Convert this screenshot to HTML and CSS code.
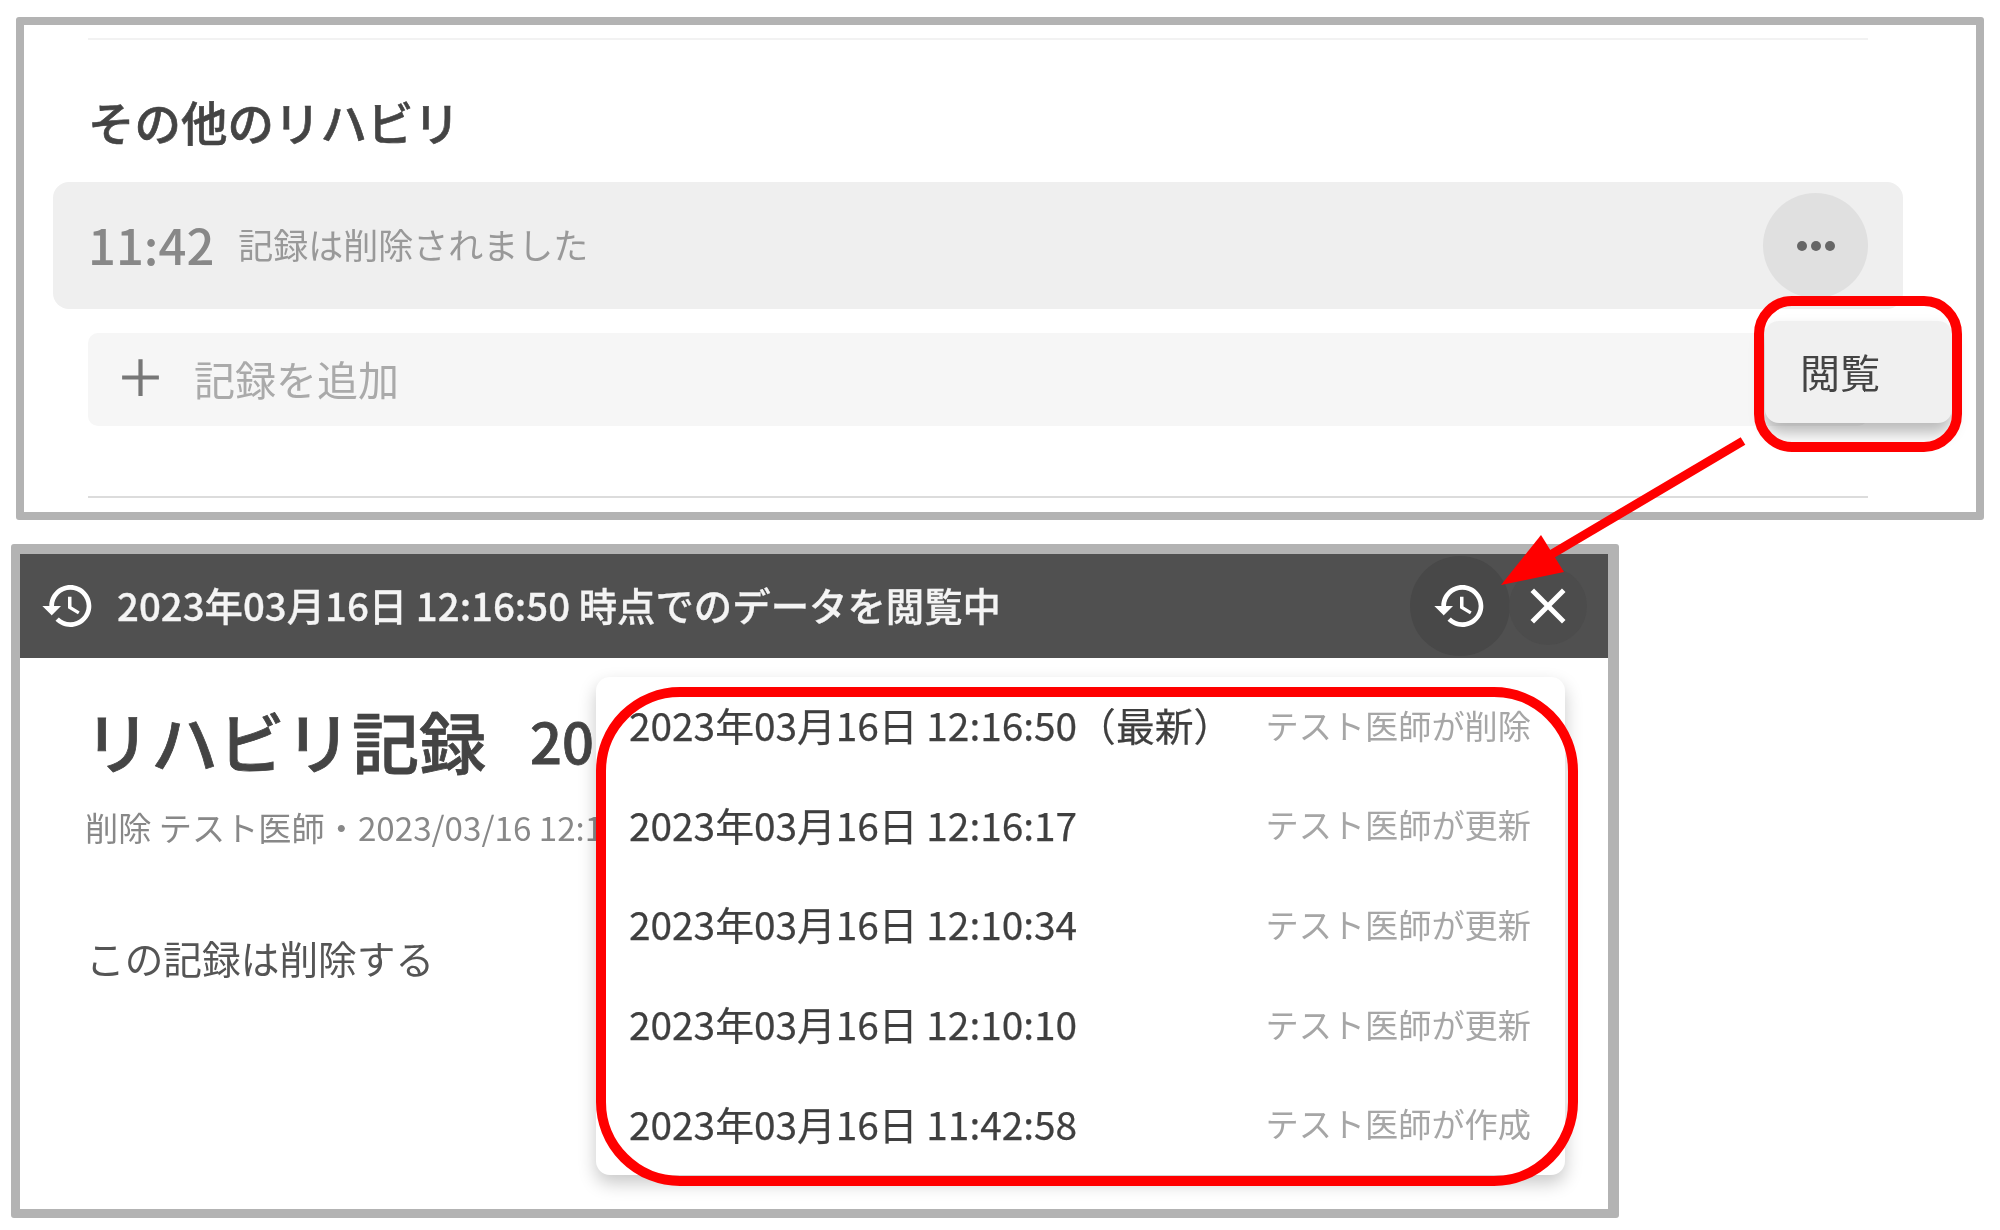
FILE: index.html
```html
<!DOCTYPE html>
<html lang="ja">
<head>
<meta charset="utf-8">
<title>リハビリ記録</title>
<link rel="stylesheet" href="styles.css">
</head>
<body>
<div class="page">
  <section class="panel panel-top">
    <div class="rule rule-light"></div>
    <h2 class="section-title">その他のリハビリ</h2>
    <div class="record">
      <span class="record-time">11:42</span>
      <span class="record-note">記録は削除されました</span>
      <span class="more-btn"><i></i><i></i><i></i></span>
    </div>
    <div class="add-row">
      <svg class="add-icon" viewBox="0 0 24 24"><path d="M19 12.8h-6.2V19h-1.6v-6.2H5v-1.6h6.2V5h1.6v6.2H19z"/></svg>
      <span>記録を追加</span>
    </div>
    <div class="rule rule-dark"></div>
  </section>

  <section class="panel panel-bottom">
    <header class="viewbar">
      <svg class="bar-icon" viewBox="0 0 24 24"><path d="M13 3c-4.97 0-9 4.03-9 9H1l3.89 3.89.07.14L9 12H6c0-3.87 3.13-7 7-7s7 3.13 7 7-3.13 7-7 7c-1.93 0-3.68-.79-4.94-2.06l-1.42 1.42C8.27 19.99 10.51 21 13 21c4.97 0 9-4.03 9-9s-4.03-9-9-9zm-1 5v5l4.28 2.54.72-1.21-3.5-2.08V8H12z"/></svg>
      <span class="bar-text">2023年03月16日 12:16:50 時点でのデータを閲覧中</span>
      <span class="bar-btn bar-btn-history">
        <svg class="bar-icon" viewBox="0 0 24 24"><path d="M13 3c-4.97 0-9 4.03-9 9H1l3.89 3.89.07.14L9 12H6c0-3.87 3.13-7 7-7s7 3.13 7 7-3.13 7-7 7c-1.93 0-3.68-.79-4.94-2.06l-1.42 1.42C8.27 19.99 10.51 21 13 21c4.97 0 9-4.03 9-9s-4.03-9-9-9zm-1 5v5l4.28 2.54.72-1.21-3.5-2.08V8H12z"/></svg>
      </span>
      <span class="bar-btn bar-btn-close">
        <svg class="close-icon" viewBox="0 0 24 24"><path d="M19 6.41 17.59 5 12 10.59 6.41 5 5 6.41 10.59 12 5 17.59 6.41 19 12 13.41 17.59 19 19 17.59 13.41 12z"/></svg>
      </span>
    </header>
    <div class="doc">
      <h1 class="doc-title">リハビリ記録<span class="doc-date">20</span></h1>
      <p class="doc-meta">削除 テスト医師・2023/03/16 12:1</p>
      <p class="doc-body">この記録は削除する</p>
    </div>
  </section>

  <div class="menu">閲覧</div>

  <ul class="history">
    <li class="history-row"><span>2023年03月16日 12:16:50（最新）</span><span class="history-who">テスト医師が削除</span></li>
    <li class="history-row"><span>2023年03月16日 12:16:17</span><span class="history-who">テスト医師が更新</span></li>
    <li class="history-row"><span>2023年03月16日 12:10:34</span><span class="history-who">テスト医師が更新</span></li>
    <li class="history-row"><span>2023年03月16日 12:10:10</span><span class="history-who">テスト医師が更新</span></li>
    <li class="history-row"><span>2023年03月16日 11:42:58</span><span class="history-who">テスト医師が作成</span></li>
  </ul>

  <div class="callout callout-menu"></div>
  <div class="callout callout-history"></div>
  <svg class="arrow" viewBox="0 0 2000 1230">
    <line x1="1743" y1="441" x2="1530" y2="567" stroke="#ff0000" stroke-width="9"/>
    <polygon points="1541,535 1564,572 1501,585" fill="#ff0000"/>
  </svg>
</div>
</body>
</html>
```
FILE: styles.css
```css
* { box-sizing: border-box; }
html, body { margin: 0; padding: 0; background: #fff; }
body {
  font-family: "Noto Sans CJK JP", "Noto Sans", sans-serif;
  color: #444;
}
.page {
  position: relative;
  width: 2000px;
  height: 1230px;
  padding-top: 17px;
  overflow: hidden;
  filter: blur(0.6px);
}
.panel {
  background: #fff;
  border: 8px solid #b3b3b3;
  border-radius: 3px;
}
.panel-top {
  width: 1968px;
  height: 503px;
  margin-left: 16px;
  padding: 13px 108px 0 64px;
}
.rule { height: 2px; }
.rule-light { background: #f2f2f2; }
.rule-dark { background: #dcdcdc; margin-top: 70px; }
.section-title {
  margin: 51px 0 0;
  font-size: 46.5px;
  line-height: 60px;
  font-weight: 500;
  color: #444;
  -webkit-text-stroke: 0.6px #444;
}
.record {
  display: flex;
  align-items: center;
  height: 127px;
  margin: 31px -35px 0 -35px;
  padding: 0 35px 0 35px;
  background: #efefef;
  border-radius: 16px;
}
.record-time {
  font-size: 49px;
  font-weight: 500;
  color: #888;
  line-height: 1;
  padding-bottom: 5px;
}
.record-note {
  margin-left: 24px;
  padding-bottom: 5px;
  font-size: 35px;
  color: #999;
}
.more-btn {
  display: flex;
  align-items: center;
  justify-content: center;
  gap: 4px;
  width: 105px;
  height: 105px;
  margin-left: auto;
  border-radius: 50%;
  background: #e0e0e0;
}
.more-btn i {
  width: 10px;
  height: 10px;
  border-radius: 50%;
  background: #666;
}
.add-row {
  display: flex;
  align-items: center;
  height: 93px;
  margin-top: 24px;
  padding: 0 0 4px 21px;
  background: #f6f6f6;
  border-radius: 10px;
  font-size: 41px;
  color: #aaa;
}
.add-icon {
  width: 63px;
  height: 63px;
  margin-right: 22px;
  fill: #777;
}
.panel-bottom {
  width: 1608px;
  height: 674px;
  margin: 24px 0 0 11px;
  border-width: 10px 11px 9px 9px;
}
.viewbar {
  display: flex;
  align-items: center;
  height: 104px;
  padding: 0 18px 0 20px;
  background: #505050;
  color: #fff;
}
.bar-icon { width: 56px; height: 56px; fill: #fff; flex: none; }
.close-icon { width: 60px; height: 60px; fill: #fff; flex: none; }
.bar-text {
  margin-left: 21px;
  padding-bottom: 5px;
  font-size: 38.4px;
  font-weight: 500;
  color: #f4f4f4;
  -webkit-text-stroke: 0.3px #f4f4f4;
}
.bar-btn {
  display: flex;
  align-items: center;
  justify-content: center;
  border-radius: 50%;
  flex: none;
}
.bar-btn-history {
  width: 100px;
  height: 100px;
  margin-left: auto;
  background: #484848;
}
.bar-btn-close {
  width: 78px;
  height: 78px;
  margin: 0 3px 0 -1px;
  background: #4c4c4c;
}
.doc { padding: 43px 0 0 68px; }
.doc-title {
  display: flex;
  align-items: center;
  margin: 0 0 0 -4px;
  height: 80px;
  padding-bottom: 4px;
  font-size: 67px;
  font-weight: 500;
  color: #444;
  -webkit-text-stroke: 0.8px #444;
  white-space: nowrap;
}
.doc-date { margin-left: 44px; font-size: 56px; }
.doc-meta {
  margin: 24px 0 0 -3px;
  font-size: 33.2px;
  line-height: 44px;
  color: #888;
  white-space: nowrap;
}
.doc-body {
  margin: 83px 0 0 -2px;
  font-size: 38.7px;
  line-height: 50px;
  color: #555;
}
.menu {
  position: absolute;
  left: 1765px;
  top: 321px;
  width: 187px;
  height: 102px;
  display: flex;
  align-items: center;
  padding: 0 0 3px 35px;
  background: #f0f0f0;
  border-radius: 14px;
  font-size: 40px;
  color: #444;
  box-shadow: 0 10px 16px rgba(0, 0, 0, .28);
}
.history {
  position: absolute;
  left: 596px;
  top: 677px;
  width: 969px;
  height: 498px;
  margin: 0;
  padding: 0;
  list-style: none;
  background: #fff;
  border-radius: 14px;
  box-shadow: 0 8px 18px rgba(0, 0, 0, .22);
}
.history-row {
  display: flex;
  justify-content: space-between;
  align-items: center;
  height: 99.6px;
  padding: 0 34px 5px 33px;
  font-size: 38.8px;
  color: #3f3f3f;
  -webkit-text-stroke: 0.25px #3f3f3f;
}
.history-who {
  font-size: 33.2px;
  color: #a6a6a6;
  -webkit-text-stroke: 0;
}
.callout {
  position: absolute;
  border: 10px solid #ff0000;
}
.callout-menu {
  left: 1754px;
  top: 296px;
  width: 208px;
  height: 156px;
  border-radius: 38px;
}
.callout-history {
  left: 596px;
  top: 687px;
  width: 982px;
  height: 499px;
  border-radius: 84px;
}
.arrow {
  position: absolute;
  left: 0;
  top: 0;
  width: 2000px;
  height: 1230px;
}
```
